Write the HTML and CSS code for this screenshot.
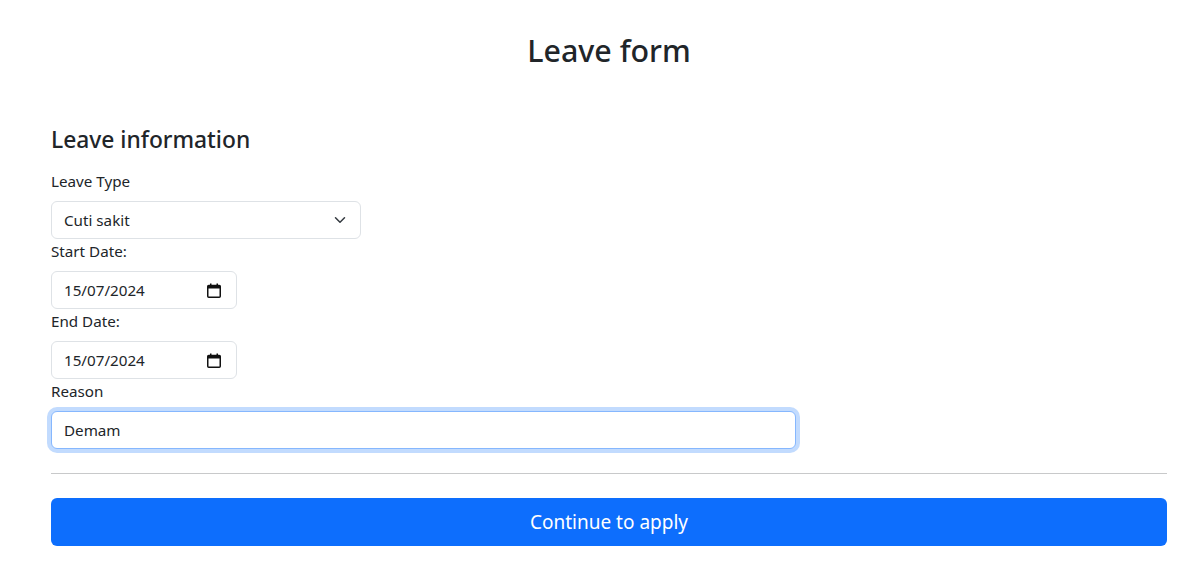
FILE: index.html
```html
<!DOCTYPE html>
<html lang="en">
<head>
<meta charset="utf-8">
<title>Leave form</title>
<link rel="stylesheet" href="styles.css">
</head>
<body>
<div class="page">
  <h2 class="title">Leave form</h2>
  <form class="form">
    <h4 class="section">Leave information</h4>
    <label class="label">Leave Type</label>
    <div class="control select">
      <span>Cuti sakit</span>
      <svg class="chev" viewBox="0 0 16 16" width="16" height="12"><path d="m2 5 6 6 6-6" fill="none" stroke="#343a40" stroke-width="2" stroke-linecap="round" stroke-linejoin="round"/></svg>
    </div>
    <label class="label">Start Date:</label>
    <div class="control date">
      <span>15/07/2024</span>
      <svg class="cal" viewBox="0 0 14 15" width="14" height="15"><rect x="0.75" y="2.5" width="12.5" height="11.75" rx="1" fill="none" stroke="#111" stroke-width="1.5"/><rect x="0.75" y="2.5" width="12.5" height="3" fill="#111"/><rect x="3" y="0.5" width="1.5" height="3" fill="#111"/><rect x="9.5" y="0.5" width="1.5" height="3" fill="#111"/></svg>
    </div>
    <label class="label">End Date:</label>
    <div class="control date">
      <span>15/07/2024</span>
      <svg class="cal" viewBox="0 0 14 15" width="14" height="15"><rect x="0.75" y="2.5" width="12.5" height="11.75" rx="1" fill="none" stroke="#111" stroke-width="1.5"/><rect x="0.75" y="2.5" width="12.5" height="3" fill="#111"/><rect x="3" y="0.5" width="1.5" height="3" fill="#111"/><rect x="9.5" y="0.5" width="1.5" height="3" fill="#111"/></svg>
    </div>
    <label class="label">Reason</label>
    <div class="control reason focus"><span>Demam</span></div>
    <hr class="rule">
    <button type="button" class="btn">Continue to apply</button>
  </form>
</div>
</body>
</html>
```

FILE: styles.css
```css
* { box-sizing: border-box; }
html, body { margin: 0; padding: 0; background: #fff; }
body {
  font-family: "Noto Sans", "Open Sans", sans-serif;
  font-size: 15.2px;
  line-height: 24px;
  color: #212529;
}
.page {
  width: 1116px;
  margin-left: 51px;
  padding-top: 32px;
}
.title {
  margin: 0;
  text-align: center;
  font-size: 30.4px;
  font-weight: 500;
  line-height: 38px;
}
.form {
  display: flex;
  flex-direction: column;
  align-items: flex-start;
  padding-top: 55px;
}
.section {
  margin: 0 0 15px;
  font-size: 22.8px;
  font-weight: 500;
  line-height: 29px;
}
.label {
  display: block;
  margin-bottom: 8px;
  line-height: 24px;
}
.control {
  display: flex;
  align-items: center;
  justify-content: space-between;
  height: 38px;
  padding: 6px 12px;
  border: 1px solid #dee2e6;
  border-radius: 6px;
  background: #fff;
}
.select { width: 310px; }
.date { width: 186px; padding-right: 15px; }
.cal { display: block; }
.reason { width: 745px; }
.focus {
  border-color: #86b7fe;
  box-shadow: 0 0 0 4px rgba(13, 110, 253, 0.25);
}
.rule {
  align-self: stretch;
  margin: 24px 0;
  border: 0;
  border-top: 1px solid #c8c9ca;
}
.btn {
  align-self: stretch;
  height: 48px;
  border: 0;
  border-radius: 6px;
  background: #0d6efd;
  color: #fff;
  font-family: inherit;
  font-size: 19px;
  line-height: 30px;
}
```
